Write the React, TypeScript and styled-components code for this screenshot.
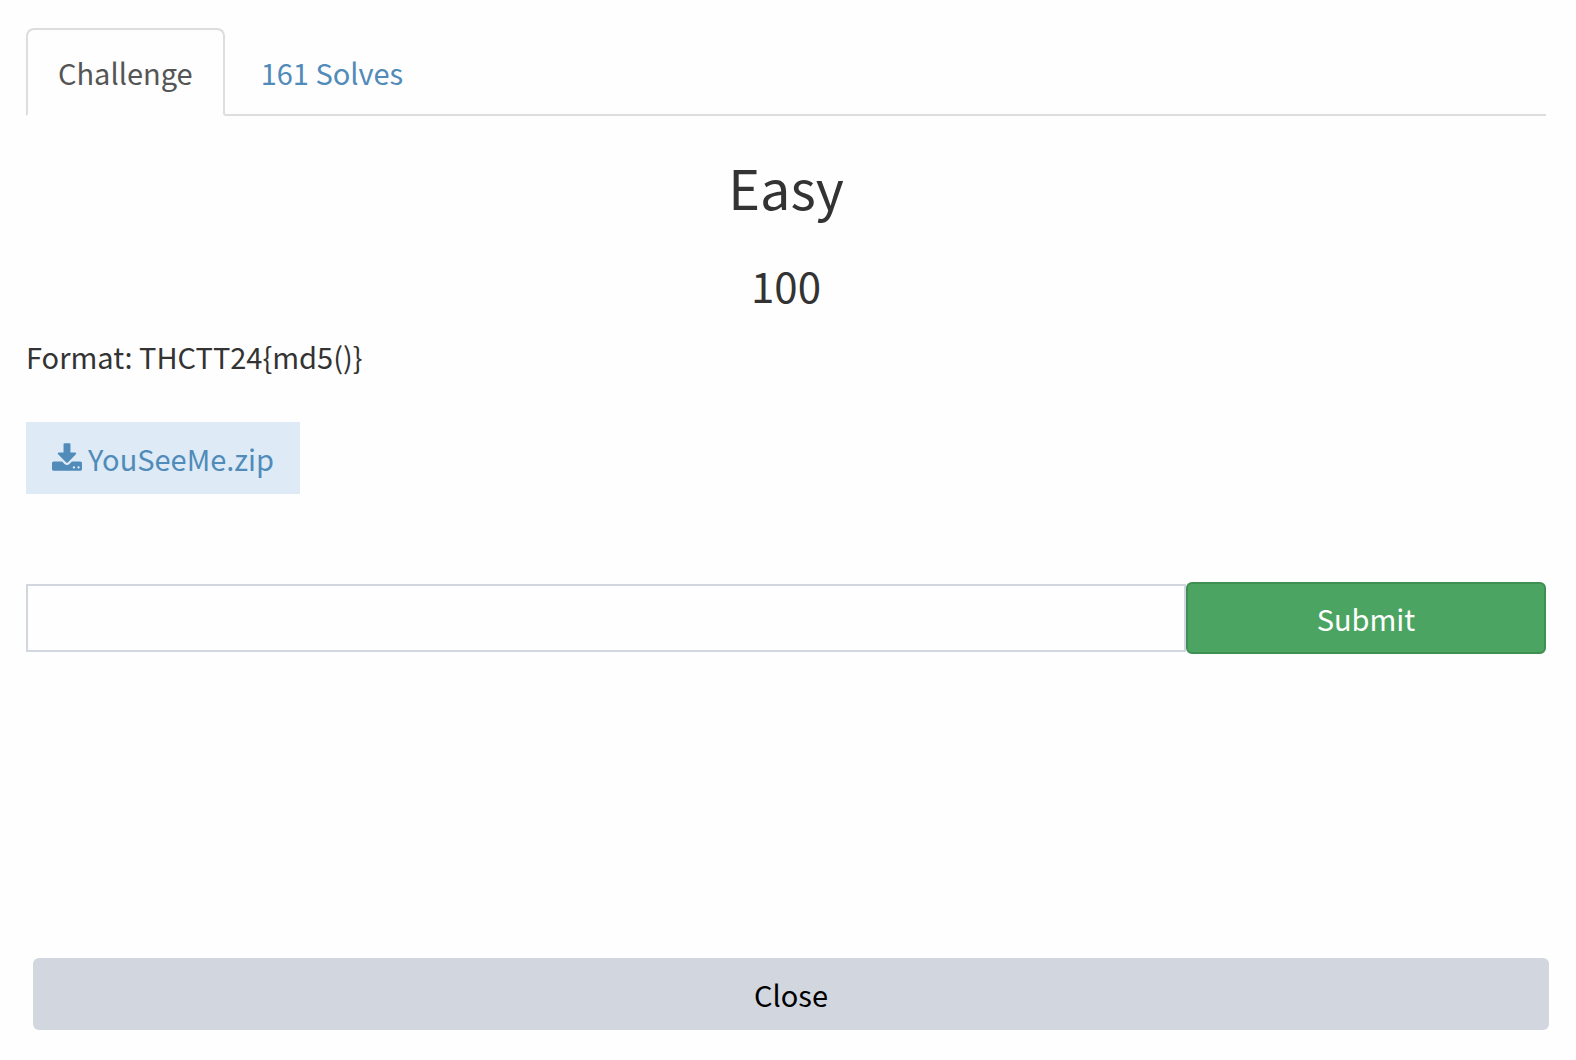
import React, { useState } from "react";
import styled, { createGlobalStyle } from "styled-components";

const GlobalStyle = createGlobalStyle`
  *, *::before, *::after { box-sizing: border-box; }
  body {
    margin: 0;
    background: #fefefe;
    color: #333333;
    font-family: "Noto Sans CJK SC", "Noto Sans", sans-serif;
    font-size: 29px;
    line-height: 44px;
  }
  button, input { font: inherit; }
`;

const Dialog = styled.main`
  display: flex;
  flex-direction: column;
  justify-content: space-between;
  gap: 40px;
  min-height: 100vh;
`;

const Body = styled.section`
  padding: 28px 30px 0 26px;
`;

const Footer = styled.footer`
  padding: 0 27px 30px 33px;
`;

const TabList = styled.nav`
  display: flex;
  gap: 4px;
  border-bottom: 2px solid #dddddd;
`;

const Tab = styled.button<{ $active: boolean }>`
  height: 88px;
  margin-bottom: -2px;
  padding: 0 30px;
  border: 2px solid ${(p) => (p.$active ? "#dddddd" : "transparent")};
  border-bottom-color: ${(p) => (p.$active ? "#fefefe" : "transparent")};
  border-radius: 8px 8px 0 0;
  background: ${(p) => (p.$active ? "#fefefe" : "transparent")};
  color: ${(p) => (p.$active ? "#555555" : "#508bba")};
  cursor: pointer;
`;

const Name = styled.h1`
  margin: 38px 0 0;
  font-size: 54px;
  font-weight: 400;
  line-height: 66px;
  text-align: center;
`;

const Points = styled.h2`
  margin: 40px 0 0;
  font-size: 42px;
  font-weight: 400;
  line-height: 50px;
  text-align: center;
`;

const Description = styled.p`
  margin: 24px 0 0;
`;

const FileLink = styled.a`
  display: flex;
  align-items: baseline;
  gap: 6px;
  width: fit-content;
  margin-top: 44px;
  padding: 14px 26px;
  background: #deebf7;
  color: #508bba;
  text-decoration: none;
`;

const FileIcon = styled.svg`
  width: 30px;
  height: 28px;
  fill: currentColor;
`;

const AnswerForm = styled.form`
  display: flex;
  align-items: center;
  margin-top: 88px;
`;

const AnswerInput = styled.input`
  flex: 1;
  min-width: 0;
  height: 68px;
  padding: 0 24px;
  border: 2px solid #d2d6de;
  border-radius: 0;
  background: #fefefe;
`;

const SubmitButton = styled.button`
  width: 360px;
  height: 72px;
  border: 2px solid #3f8f53;
  border-radius: 6px;
  background: #4ca462;
  color: #ffffff;
  cursor: pointer;
`;

const CloseButton = styled.button`
  display: block;
  width: 100%;
  height: 72px;
  border: 0;
  border-radius: 6px;
  background: #d2d6de;
  color: #000000;
  cursor: pointer;
`;

export default function App() {
  const [tab, setTab] = useState(0);
  return (
    <Dialog>
      <GlobalStyle />
      <Body>
        <TabList>
          {["Challenge", "161 Solves"].map((label, i) => (
            <Tab key={label} type="button" $active={tab === i} onClick={() => setTab(i)}>
              {label}
            </Tab>
          ))}
        </TabList>
        <Name>Easy</Name>
        <Points>100</Points>
        <Description>{"Format: THCTT24{md5()}"}</Description>
        <FileLink href="#YouSeeMe.zip">
          <FileIcon viewBox="0 0 1664 1536" aria-hidden="true">
            <path d="M1280 1344q0-26-19-45t-45-19-45 19-19 45 19 45 45 19 45-19 19-45zm256 0q0-26-19-45t-45-19-45 19-19 45 19 45 45 19 45-19 19-45zm128-224v320q0 40-28 68t-68 28h-1472q-40 0-68-28t-28-68v-320q0-40 28-68t68-28h465l135 136q58 56 136 56t136-56l136-136h464q40 0 68 28t28 68zm-325-569q17 41-14 70l-448 448q-18 19-45 19t-45-19l-448-448q-31-29-14-70 17-39 59-39h256v-448q0-26 19-45t45-19h256q26 0 45 19t19 45v448h256q42 0 59 39z" />
          </FileIcon>
          YouSeeMe.zip
        </FileLink>
        <AnswerForm onSubmit={(e) => e.preventDefault()}>
          <AnswerInput type="text" aria-label="Flag" />
          <SubmitButton type="submit">Submit</SubmitButton>
        </AnswerForm>
      </Body>
      <Footer>
        <CloseButton type="button">Close</CloseButton>
      </Footer>
    </Dialog>
  );
}
